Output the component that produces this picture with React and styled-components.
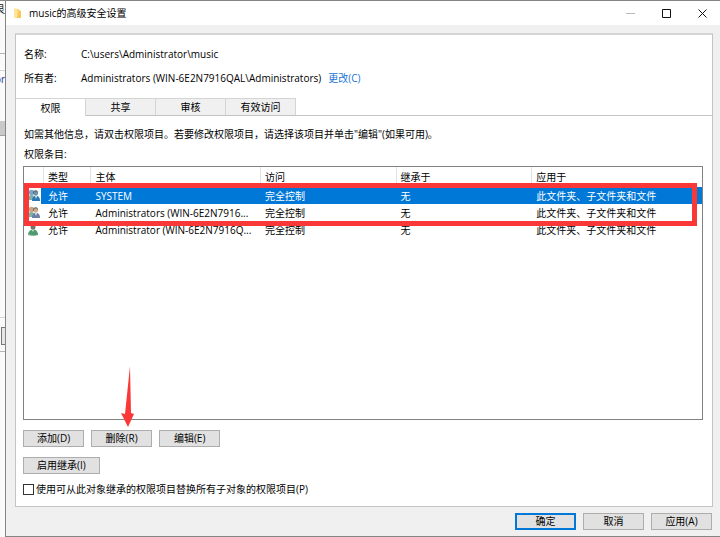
import React from "react";
import styled, { createGlobalStyle, css } from "styled-components";

const GlobalStyle = createGlobalStyle`
  *, *::before, *::after { box-sizing: border-box; }
  body {
    margin: 0;
    background: #fff;
    color: #000;
    font-family: "Open Sans", "Noto Sans CJK SC", sans-serif;
    font-size: 10px;
    line-height: 16px;
  }
  button, input { font: inherit; color: inherit; margin: 0; }
`;

const Desktop = styled.div`
  display: grid;
  grid-template-columns: 5px minmax(0, 1fr);
  min-height: 100vh;
`;

const Behind = styled.div`
  display: flex;
  flex-direction: column;
  overflow: hidden;
  background: #fafafa;
  border-top: 1px solid #8a8a8a;
`;

const BehindBlock = styled.div`
  display: flex;
  flex: none;
  justify-content: flex-end;
  height: ${(p) => p.$height}px;
  background: ${(p) => p.$fill || "transparent"};
  color: ${(p) => p.$ink || "#111"};
  border-bottom: 1px solid ${(p) => p.$line || "transparent"};
`;

const BehindButton = styled.div`
  flex: none;
  height: 18px;
  margin-left: 1px;
  border: 1px solid #777;
  border-right: 0;
  background: #e6e6e6;
`;

const Dialog = styled.main`
  display: flex;
  flex-direction: column;
  background: #f0f0f0;
  border: 1px solid #858585;
  border-right: 0;
`;

const TitleBar = styled.header`
  display: flex;
  align-items: stretch;
  height: 24px;
  padding-left: 8px;
  background: #fff;
`;

const Title = styled.h1`
  display: flex;
  flex: 1;
  align-items: center;
  gap: 7px;
  margin: 0;
  font-size: 10px;
  font-weight: 400;
`;

const WindowButton = styled.button`
  display: grid;
  place-items: center;
  width: 36px;
  padding: 0;
  border: 0;
  background: transparent;
`;

const Panel = styled.section`
  display: flex;
  flex: 1;
  flex-direction: column;
  margin: 8px 7px 0 9px;
  background: #fff;
  border: 1px solid #c4c4c4;
  border-top: 2px solid #d4d4d4;
`;

const Facts = styled.dl`
  display: grid;
  grid-template-columns: 57px 1fr;
  row-gap: 8px;
  margin: 0;
  padding: 11px 8px 12px;

  dt, dd { margin: 0; }
`;

const ChangeLink = styled.a`
  margin-left: 7px;
  color: #1a73d9;
  text-decoration: none;
`;

const Tabs = styled.div`
  display: flex;
  height: 18px;
  border-bottom: 1px solid #c4c4c4;
`;

const Tab = styled.button`
  width: 70px;
  padding: 0;
  line-height: 14px;
  border: solid #d4d4d4;
  border-width: 1px 1px 0 0;
  background: #f0f0f0;

  ${(p) =>
    p.$active &&
    css`
      margin-bottom: -1px;
      background: #fff;
    `}
`;

const TabPage = styled.div`
  display: flex;
  flex: 1;
  flex-direction: column;
  padding: 10px 9px 9px 7px;
`;

const Hint = styled.p`
  margin: 0 0 4px 1px;
`;

const ListBox = styled.div`
  position: relative;
  flex: 1;
  min-height: 120px;
  border: 1px solid #828282;
`;

const Table = styled.table`
  width: 100%;
  table-layout: fixed;
  border-collapse: separate;
  border-spacing: 0;
  text-align: left;
`;

const Column = styled.col`
  width: ${(p) => p.$width};
`;

const HeadCell = styled.th`
  height: 20px;
  padding: 0 0 0 4px;
  font-weight: 400;
  border-right: 1px solid #e2e2e2;

  &:last-child { border-right: 0; }
`;

const Cell = styled.td`
  height: 17px;
  padding: 0 4px;
  overflow: hidden;
  line-height: 16px;
  white-space: nowrap;
  text-overflow: ellipsis;
`;

const IconCell = styled(Cell)`
  padding: 0 3px;
  text-overflow: clip;
  svg { display: block; }
`;

const Row = styled.tr`
  ${(p) =>
    p.$selected &&
    css`
      color: #fff;
      background: #0078d7;

      ${IconCell} {
        background: linear-gradient(to right, #fff 17px, #0078d7 17px);
      }
    `}
`;

const Highlight = styled.div`
  position: absolute;
  top: 16px;
  right: 5px;
  left: 0;
  height: 43px;
  border: 5px solid #fb3838;
`;

const Arrow = styled.svg`
  position: absolute;
  bottom: -9px;
  left: 97px;
`;

const Buttons = styled.div`
  display: flex;
  gap: 7px;
  margin-top: 10px;
`;

const Button = styled.button`
  min-width: 61px;
  height: 17px;
  padding: 0 13px;
  line-height: 13px;
  white-space: nowrap;
  background: #e1e1e1;
  border: 1px solid #adadad;

  ${(p) =>
    p.$primary &&
    css`
      line-height: 11px;
      border: 2px solid #0078d7;
    `}
`;

const Check = styled.label`
  display: flex;
  align-items: center;
  gap: 2px;
  margin-top: 7px;
`;

const CheckBox = styled.input`
  appearance: none;
  width: 11px;
  height: 11px;
  background: #fff;
  border: 1px solid #333;
`;

const Footer = styled.footer`
  display: flex;
  justify-content: flex-end;
  gap: 7px;
  padding: 6px 8px;

  ${Button} { padding: 0; }
`;

const FolderIcon = () => (
  <svg width="8" height="11" viewBox="0 0 8 11" aria-hidden="true">
    <path d="M0 1h5v9l-5 0z" fill="#ffd979" />
    <path d="M5 2l2 1v7H3z" fill="#f7c75a" />
    <path d="M0 0.500h3v9.500H0z" fill="#ffe49b" />
  </svg>
);

const GroupIcon = ({ back, face, body }) => (
  <svg width="13" height="13" viewBox="0 0 13 13" aria-hidden="true">
    <circle cx="4.500" cy="3.500" r="2.800" fill={back} />
    <path d="M0 11c0-3 2-5 4.500-5S8 8 8 11z" fill="#7db2a5" />
    <path d="M6 5c-.5-5 6-5 5 0z" fill="#4c5667" />
    <circle cx="8.800" cy="4.500" r="2.200" fill={face} />
    <path d="M5 12c0-3 1-5 4-5s4 2 4 5z" fill={body} />
    <path d="M8 7l1 3 1-3z" fill="#e5edf4" />
  </svg>
);

const UserIcon = () => (
  <svg width="13" height="13" viewBox="0 0 13 13" aria-hidden="true">
    <circle cx="6" cy="4" r="2.500" fill="#727568" />
    <path d="M1 12c0-3 2-5.500 5-5.500s5 2 5 5.500c-3 1-7 1-10 0z" fill="#4d9a70" />
    <path d="M5 7l1 2 1-2z" fill="#d8e8d8" />
    <path d="M1 11l5 1.500H2z" fill="#a7c8ba" />
  </svg>
);

const entries = [
  {
    icon: <GroupIcon back="#76a9c9" face="#6e93ae" body="#2b78b4" />,
    name: "SYSTEM",
    selected: true,
  },
  {
    icon: <GroupIcon back="#c9a582" face="#d3ab83" body="#6c7fa5" />,
    name: "Administrators (WIN-6E2N7916...",
  },
  { icon: <UserIcon />, name: "Administrator (WIN-6E2N7916Q..." },
];

const tabs = ["权限", "共享", "审核", "有效访问"];

export default function App() {
  return (
    <>
      <GlobalStyle />
      <Desktop>
        <Behind aria-hidden="true">
          <BehindBlock $height={53} $line="#b5b5b5">艮</BehindBlock>
          <BehindBlock $height={17} $line="#d5d5d5" />
          <BehindBlock $height={50} $ink="#27359a">or</BehindBlock>
          <BehindBlock $height={15} $fill="#c9c9c9" $line="#a0a0a0" />
          <BehindBlock $height={182} $line="#d5d5d5" />
          <BehindBlock $height={9} />
          <BehindButton />
          <BehindBlock $height={7} $line="#b5b5b5" />
        </Behind>
        <Dialog>
          <TitleBar>
            <Title>
              <FolderIcon />
              music的高级安全设置
            </Title>
            <WindowButton aria-label="最小化" disabled>
              <svg width="9" height="9"><path d="M0 4.500h9" stroke="#bbb" /></svg>
            </WindowButton>
            <WindowButton aria-label="最大化">
              <svg width="9" height="9"><path d="M.5.500h8v8h-8z" fill="none" stroke="#111" /></svg>
            </WindowButton>
            <WindowButton aria-label="关闭">
              <svg width="9" height="9"><path d="M.5.500l8 8m0-8l-8 8" stroke="#111" /></svg>
            </WindowButton>
          </TitleBar>
          <Panel>
            <Facts>
              <dt>名称:</dt>
              <dd>C:\users\Administrator\music</dd>
              <dt>所有者:</dt>
              <dd>
                Administrators (WIN-6E2N7916QAL\Administrators)
                <ChangeLink href="#change">更改(C)</ChangeLink>
              </dd>
            </Facts>
            <Tabs role="tablist">
              {tabs.map((name, i) => (
                <Tab key={name} role="tab" aria-selected={i === 0} $active={i === 0}>
                  {name}
                </Tab>
              ))}
            </Tabs>
            <TabPage role="tabpanel">
              <Hint>如需其他信息，请双击权限项目。若要修改权限项目，请选择该项目并单击"编辑"(如果可用)。</Hint>
              <Hint>权限条目:</Hint>
              <ListBox>
                <Table>
                  <colgroup>
                    <Column $width="20px" />
                    <Column $width="7%" />
                    <Column $width="25%" />
                    <Column $width="20%" />
                    <Column $width="20%" />
                    <Column $width="auto" />
                  </colgroup>
                  <thead>
                    <tr>
                      <HeadCell aria-label="图标" />
                      <HeadCell>类型</HeadCell>
                      <HeadCell>主体</HeadCell>
                      <HeadCell>访问</HeadCell>
                      <HeadCell>继承于</HeadCell>
                      <HeadCell>应用于</HeadCell>
                    </tr>
                  </thead>
                  <tbody>
                    {entries.map((entry) => (
                      <Row key={entry.name} $selected={entry.selected}>
                        <IconCell>{entry.icon}</IconCell>
                        <Cell>允许</Cell>
                        <Cell>{entry.name}</Cell>
                        <Cell>完全控制</Cell>
                        <Cell>无</Cell>
                        <Cell>此文件夹、子文件夹和文件</Cell>
                      </Row>
                    ))}
                  </tbody>
                </Table>
                <Highlight />
                <Arrow width="14" height="62" viewBox="0 0 14 62" aria-hidden="true">
                  <path d="M9 0L10 47L13 48L7 61L0 47L4 48Z" fill="#fb3838" />
                </Arrow>
              </ListBox>
              <Buttons>
                <Button>添加(D)</Button>
                <Button>删除(R)</Button>
                <Button>编辑(E)</Button>
              </Buttons>
              <Buttons>
                <Button>启用继承(I)</Button>
              </Buttons>
              <Check>
                <CheckBox type="checkbox" />
                使用可从此对象继承的权限项目替换所有子对象的权限项目(P)
              </Check>
            </TabPage>
          </Panel>
          <Footer>
            <Button $primary>确定</Button>
            <Button>取消</Button>
            <Button>应用(A)</Button>
          </Footer>
        </Dialog>
      </Desktop>
    </>
  );
}
